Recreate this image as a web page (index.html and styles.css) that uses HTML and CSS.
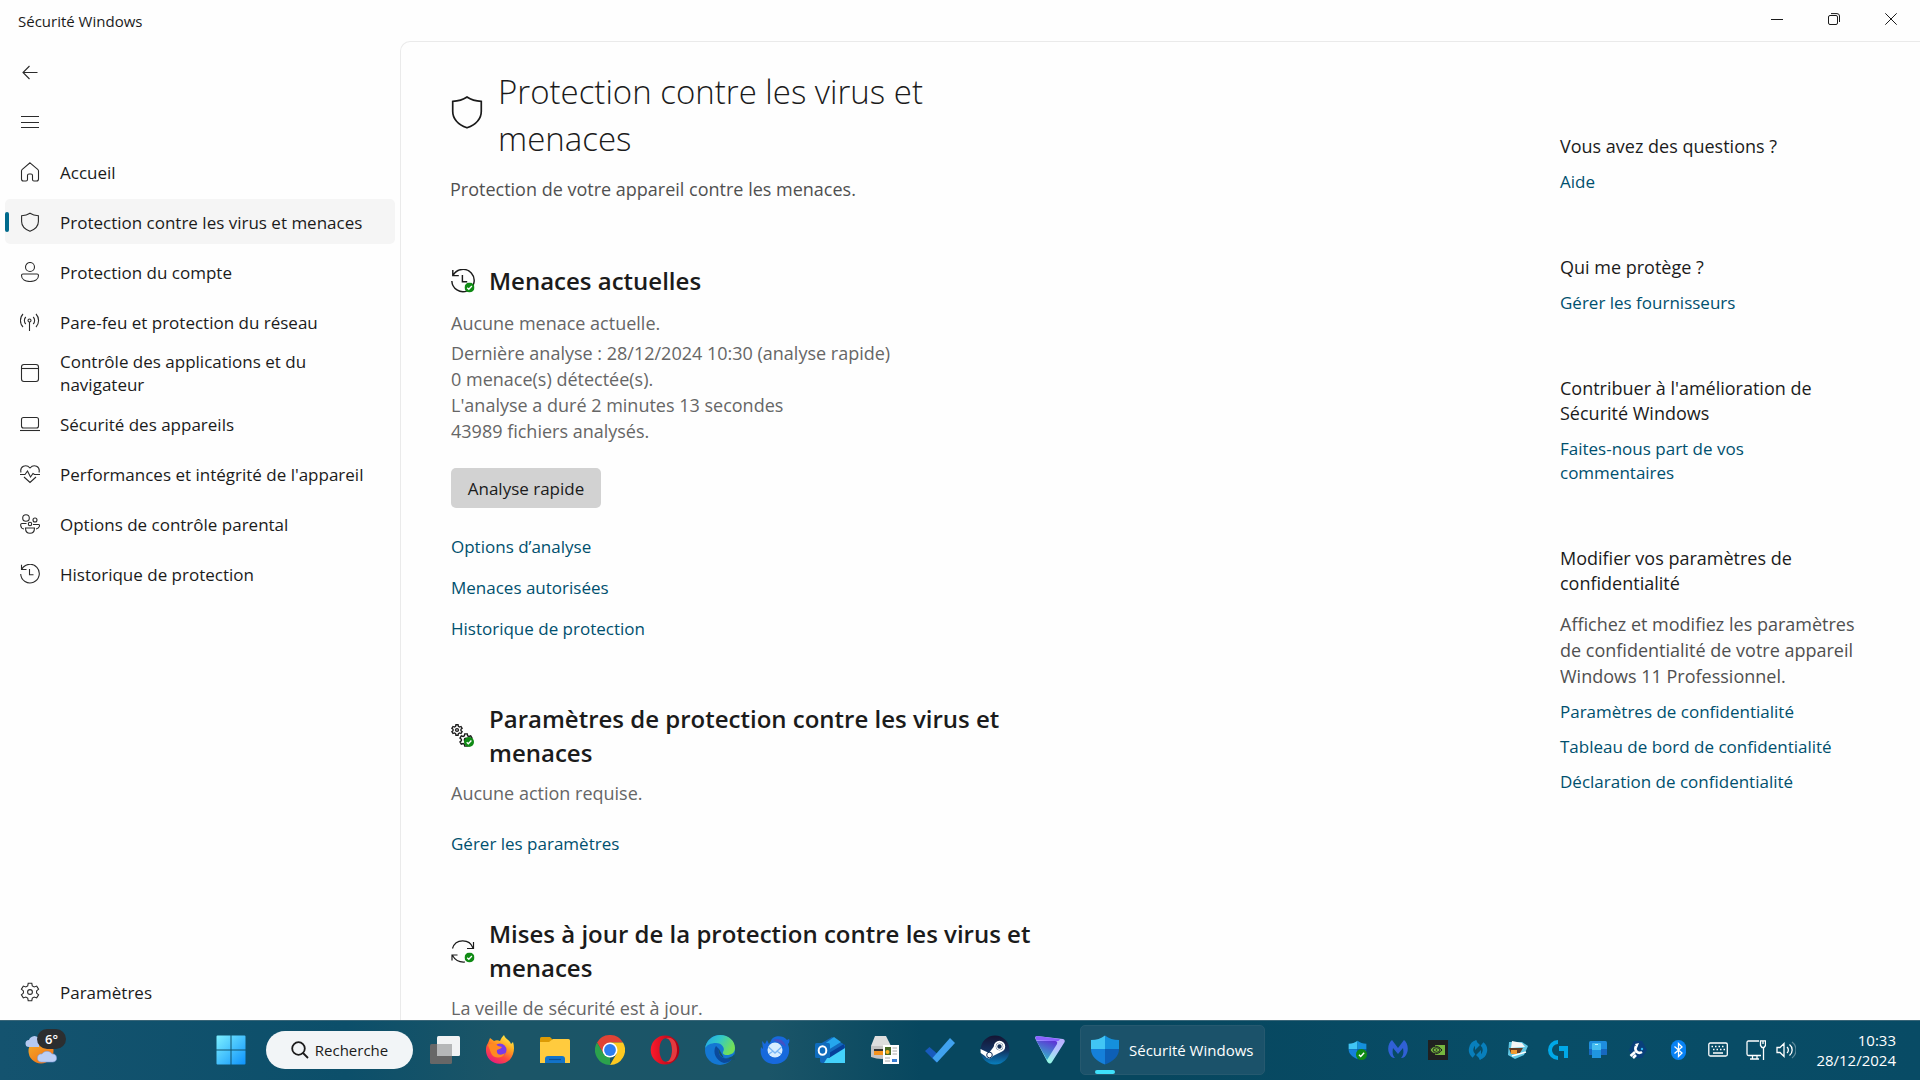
FILE: index.html
```html
<!DOCTYPE html>
<html lang="fr">
<head>
    <meta charset="UTF-8">
    <meta name="viewport" content="width=device-width, initial-scale=1.0">
    <title>Sécurité Windows</title>
    <link rel="stylesheet" href="styles.css">
</head>
<body>
    <!-- shared icons -->
    <svg class="sprite" aria-hidden="true">
        <symbol id="shield" viewBox="0 0 20 20"><path d="M10 1.2C7.600 2.800 4.800 3.600 1.600 3.800V9.500C1.600 14 4.800 17.300 10 19.300C15.200 17.300 18.400 14 18.400 9.500V3.800C15.200 3.600 12.400 2.800 10 1.200Z"/></symbol>
        <symbol id="history" viewBox="0 0 20 20"><path d="M1.500 .8V5.500H6.500M1.800 5.200A9.300 9.300 0 1 1 .7 10M9.500 5V10.700H13.500"/></symbol>
        <symbol id="gear" viewBox="0 0 20 20"><path d="M8.200 1.300H11.800L12.300 3.900L14.200 5L16.700 4.100L18.600 7.200L16.600 8.900V11.100L18.600 12.800L16.700 15.900L14.200 15L12.300 16.100L11.800 18.700H8.200L7.700 16.100L5.800 15L3.300 15.900L1.400 12.800L3.400 11.100V8.900L1.400 7.200L3.300 4.100L5.800 5L7.700 3.900Z"/><circle cx="10" cy="10" r="2.400"/></symbol>
        <symbol id="check" viewBox="0 0 10 10"><circle cx="5" cy="5" r="5" fill="#0f8a14" stroke="none"/><path d="M2.700 5.200L4.300 6.800L7.400 3.500" fill="none" stroke="#fff" stroke-width="1.300"/></symbol>
        <symbol id="defender" viewBox="0 0 30 30"><path d="M15 .5C11 3.500 6.500 5 1 5V14H15Z" fill="#41c5f5"/><path d="M15 .5C19 3.500 23.500 5 29 5V14H15Z" fill="#1590dc"/><path d="M1 14H15V29.500C6.500 26 1 21.500 1 14Z" fill="#1580da"/><path d="M29 14H15V29.500C23.500 26 29 21.500 29 14Z" fill="#0d5fb6"/></symbol>
    </svg>

    <header class="titlebar">
        <span class="window-title">Sécurité Windows</span>
        <div class="window-buttons">
            <button aria-label="Réduire"><svg width="12" height="12" viewBox="0 0 12 12"><path d="M0 6.500H12"/></svg></button>
            <button aria-label="Niveau inférieur"><svg width="12" height="12" viewBox="0 0 12 12"><rect x=".5" y="2.500" width="9" height="9" rx="1.500"/><path d="M3 .6H9A2.500 2.500 0 0 1 11.500 3V9"/></svg></button>
            <button aria-label="Fermer"><svg width="12" height="12" viewBox="0 0 12 12"><path d="M.3 .3L11.700 11.700M11.700 .3L.3 11.700"/></svg></button>
        </div>
    </header>

    <div class="window">
        <nav class="sidebar">
            <button class="nav-item" aria-label="Précédent"><svg viewBox="0 0 20 20"><path d="M17.500 10.500H3M9.500 4L3 10.500L9.500 17"/></svg></button>
            <button class="nav-item" aria-label="Menu"><svg viewBox="0 0 20 20"><path d="M1 4.500H19M1 10.500H19M1 15.500H19"/></svg></button>
            <a href="#" class="nav-item"><svg viewBox="0 0 20 20"><path d="M10 .8L17.700 7.300Q18.500 8 18.500 9V17Q18.500 19 16.500 19H14Q12.500 19 12.500 17.500V13.500Q12.500 12 11 12H9Q7.500 12 7.500 13.500V17.500Q7.500 19 6 19H3.500Q1.500 19 1.500 17V9Q1.500 8 2.300 7.300Z"/></svg><span>Accueil</span></a>
            <a href="#" class="nav-item active"><svg><use href="#shield"/></svg><span>Protection contre les virus et menaces</span></a>
            <a href="#" class="nav-item"><svg viewBox="0 0 20 20"><circle cx="10" cy="5" r="4.500"/><path d="M3 12H17Q18.500 12 18.500 13.500C18.500 17.500 14.500 19.500 10 19.500S1.500 17.500 1.500 13.500Q1.500 12 3 12Z"/></svg><span>Protection du compte</span></a>
            <a href="#" class="nav-item"><svg viewBox="0 0 20 20"><circle cx="9.500" cy="8.500" r="1.500"/><path d="M9.500 10V19M5.800 12A5 5 0 0 1 5.800 5M13.200 12A5 5 0 0 0 13.200 5M3 15A9.500 9.500 0 0 1 3 2M16 15A9.500 9.500 0 0 0 16 2"/></svg><span>Pare-feu et protection du réseau</span></a>
            <a href="#" class="nav-item two-lines"><svg viewBox="0 0 20 20"><rect x="1.500" y="1.500" width="17" height="17" rx="2.500"/><path d="M1.500 5.500H18.500"/></svg><span>Contrôle des applications et du navigateur</span></a>
            <a href="#" class="nav-item"><svg viewBox="0 0 20 20"><rect x="1.500" y="3.500" width="17" height="10.500" rx="2"/><path d="M0 16.500H20"/></svg><span>Sécurité des appareils</span></a>
            <a href="#" class="nav-item"><svg viewBox="0 0 20 20"><path d="M1 8.500C-.5 2.500 6 -.5 10 4C14 -.5 20.500 2.500 19 8.500M0 10.500H5L7.500 7L10.500 13L13 9.500L14.500 10.500H20M4 13L10 18.500L16 13"/></svg><span>Performances et intégrité de l'appareil</span></a>
            <a href="#" class="nav-item"><svg viewBox="0 0 20 20"><circle cx="6" cy="4" r="3.300"/><circle cx="15" cy="6" r="2"/><circle cx="10" cy="10" r="1.700"/><path d="M6.500 9.500H2Q.5 9.500 .7 11.500Q1 14.500 4 15M13 10.500H18.500Q20 10.500 19.300 12.500Q18.500 14.500 16 15M5.500 14H14.500C14.500 17.500 12.500 19.300 10 19.300S5.500 17.500 5.500 14Z"/></svg><span>Options de contrôle parental</span></a>
            <a href="#" class="nav-item"><svg><use href="#history"/></svg><span>Historique de protection</span></a>
            <a href="#" class="nav-item settings"><svg><use href="#gear"/></svg><span>Paramètres</span></a>
        </nav>

        <div class="page">
            <main class="content">
                <div class="page-title">
                    <svg><use href="#shield"/></svg>
                    <h1>Protection contre les virus et menaces</h1>
                </div>
                <p class="subtitle">Protection de votre appareil contre les menaces.</p>

                <section class="threats">
                    <div class="section-title">
                        <svg viewBox="0 0 24 24"><use href="#history" width="24" height="24"/><use href="#check" x="13.500" y="13.500" width="10" height="10"/></svg>
                        <h2>Menaces actuelles</h2>
                    </div>
                    <p class="status">Aucune menace actuelle.</p>
                    <p class="details">Dernière analyse : 28/12/2024 10:30 (analyse rapide)<br>
                        0 menace(s) détectée(s).<br>
                        L'analyse a duré 2 minutes 13 secondes<br>
                        43989 fichiers analysés.</p>
                    <button class="scan-button">Analyse rapide</button>
                    <div class="links">
                        <a href="#">Options d’analyse</a>
                        <a href="#">Menaces autorisées</a>
                        <a href="#">Historique de protection</a>
                    </div>
                </section>

                <section>
                    <div class="section-title">
                        <svg viewBox="0 0 24 24"><use href="#gear" x="0" y="0" width="12" height="12" stroke-width="2.200"/><use href="#gear" x="8" y="9" width="14" height="14" stroke-width="2"/><use href="#check" x="13" y="13" width="10" height="10"/></svg>
                        <h2>Paramètres de protection contre les virus et menaces</h2>
                    </div>
                    <p class="status">Aucune action requise.</p>
                    <div class="links">
                        <a href="#">Gérer les paramètres</a>
                    </div>
                </section>

                <section>
                    <div class="section-title">
                        <svg viewBox="0 0 24 24"><path d="M1.500 9.500C4.500 -.5 18.500 -.5 22 9M22.500 3V9.500H16M1 21.500V16H6.500M1.500 16.500C4 21 8 23.500 14 23"/><use href="#check" x="13.500" y="13.500" width="10" height="10"/></svg>
                        <h2>Mises à jour de la protection contre les virus et menaces</h2>
                    </div>
                    <p class="status">La veille de sécurité est à jour.</p>
                </section>
            </main>

            <aside class="help">
                <section>
                    <h3>Vous avez des questions ?</h3>
                    <a href="#">Aide</a>
                </section>
                <section>
                    <h3>Qui me protège ?</h3>
                    <a href="#">Gérer les fournisseurs</a>
                </section>
                <section>
                    <h3>Contribuer à l'amélioration de Sécurité Windows</h3>
                    <a href="#">Faites-nous part de vos<br>commentaires</a>
                </section>
                <section>
                    <h3>Modifier vos paramètres de confidentialité</h3>
                    <p>Affichez et modifiez les paramètres de confidentialité de votre appareil Windows 11 Professionnel.</p>
                    <a href="#">Paramètres de confidentialité</a>
                    <a href="#">Tableau de bord de confidentialité</a>
                    <a href="#">Déclaration de confidentialité</a>
                </section>
            </aside>
        </div>
    </div>

    <footer class="taskbar">
        <div class="widgets">
            <button class="weather" aria-label="Météo">
                <svg width="34" height="30" viewBox="0 0 34 30">
                    <defs><linearGradient id="sun" x1="0" y1="0" x2="0.700" y2="1"><stop offset="0" stop-color="#f5b12a"/><stop offset="1" stop-color="#f07318"/></linearGradient></defs>
                    <circle cx="16" cy="17" r="12.500" fill="url(#sun)"/>
                    <path d="M4 13A3.500 3.500 0 0 1 4 6A6 6 0 0 1 14 4V13Z" fill="#b5c9f0"/>
                    <path d="M16 28A4 4 0 0 1 17 20A6 6 0 0 1 27 20A4 4 0 0 1 28 28Z" fill="#bccff5" stroke="#7f9fdd" stroke-width=".6"/>
                </svg>
                <span class="badge">6°</span>
            </button>
        </div>

        <div class="apps">
            <button class="app" aria-label="Démarrer"><svg viewBox="0 0 30 30"><defs><linearGradient id="win" x1="0" y1="0" x2="1" y2="1"><stop offset="0" stop-color="#7df0ff"/><stop offset="1" stop-color="#0d92fb"/></linearGradient></defs><path d="M1.500 .5H14.500V14.500H.5V1.500Q.5 .5 1.500 .5ZM15.500 .5H28.500Q29.500 .5 29.500 1.500V14.500H15.500ZM.5 15.500H14.500V29.500H1.500Q.5 29.500 .5 28.500ZM15.500 15.500H29.500V28.500Q29.500 29.500 28.500 29.500H15.500Z" fill="url(#win)"/></svg></button>
            <button class="search"><svg width="18" height="18" viewBox="0 0 18 18"><circle cx="7.500" cy="7.500" r="6.300"/><path d="M12 12L17 17"/></svg>Recherche</button>
            <button class="app" aria-label="Vue des tâches"><svg viewBox="0 0 30 30"><rect y="9" width="22" height="20" rx="1.500" fill="#676767"/><rect x="7" y="1" width="23" height="20" rx="1.500" fill="#f1f3f4"/><path d="M7 9H22V21H8.500Q7 21 7 19.500Z" fill="#b5b7b8"/></svg></button>
            <button class="app" aria-label="Firefox"><svg viewBox="0 0 30 30">
                <defs><linearGradient id="fox" x1=".8" y1="0" x2=".2" y2="1"><stop offset="0" stop-color="#fff44f"/><stop offset=".35" stop-color="#ffa51e"/><stop offset=".65" stop-color="#ff4a3d"/><stop offset="1" stop-color="#e31587"/></linearGradient></defs>
                <path d="M5 3L9 6C11 5 13 5 15 6C16 3 18 1 19 0C20 4 25 5 26 9L28 7C30 13 29 20 25 24.500C20 30 10 30 5 25C0 20 0 12 3 8Z" fill="url(#fox)"/>
                <circle cx="15" cy="15" r="6.500" fill="#7a3be8"/><path d="M3 10C7 7 11 9 13 11L17 12C16 14 13 14 12 15C11 20 16 21 20 18C18 24 8 24 6 18Z" fill="#ff8a21"/></svg></button>
            <button class="app" aria-label="Explorateur de fichiers"><svg viewBox="0 0 30 30"><path d="M0 3.500Q0 2 1.500 2H10L13 5V12H0Z" fill="#dc9b05"/><path d="M0 7H9L13 4H28.500Q30 4 30 5.500V28H0Z" fill="#ffcb3e"/><path d="M5 28V24Q5 21 8 21H22Q25 21 25 24V28Z" fill="#1273c9"/><path d="M9 24.500H21" stroke="#0b4f94" stroke-width="1.200"/></svg></button>
            <button class="app" aria-label="Chrome"><svg viewBox="0 0 30 30"><path d="M2 7.500A15 15 0 0 1 28 7.500H15V15L8.500 18.800Z" fill="#e04335"/><path d="M2 7.500L8.500 18.800L15 22.500V30A15 15 0 0 1 2 7.500Z" fill="#2ba24c"/><path d="M28 7.500A15 15 0 0 1 15 30L21.500 18.800L15 7.500Z" fill="#fdc921"/><circle cx="15" cy="15" r="7.500" fill="#fff"/><circle cx="15" cy="15" r="5.900" fill="#2d7df0"/></svg></button>
            <button class="app" aria-label="Opera"><svg viewBox="0 0 30 30"><defs><linearGradient id="op" x1="0" y1="0" x2="1" y2="0"><stop offset="0" stop-color="#fb1b2c"/><stop offset="1" stop-color="#a70014"/></linearGradient></defs><path fill-rule="evenodd" d="M15 .5A14.300 14.500 0 1 0 15 29.500A14.300 14.500 0 1 0 15 .5ZM16 3.200C19.500 3.200 22 8 22 15S19.500 26.800 16 26.800S9.500 22 9.500 15S12 3.200 16 3.200Z" fill="url(#op)"/><path d="M16 3.200C24 1 27 9 27 15S24 29 16 26.800C19.500 26.800 22 22 22 15S19.500 3.200 16 3.200Z" fill="#e33a3f"/></svg></button>
            <button class="app" aria-label="Edge"><svg viewBox="0 0 30 30"><defs><linearGradient id="ed" x1="0" y1="0" x2="1" y2=".4"><stop offset="0" stop-color="#20a5ea"/><stop offset=".5" stop-color="#32c8c8"/><stop offset="1" stop-color="#72e058"/></linearGradient></defs><circle cx="15" cy="15" r="15" fill="#1477d3"/><path d="M0 14C1 5 8 0 15 0C24 0 30 6 30 13C30 18 26 20 22 20C18 20 17 18 18.500 16C20 13 17 8 11 8C6 8 1 10 0 14Z" fill="url(#ed)"/><path d="M11 11C7 17 11 26 19 28C23 28 27 25 28.500 22C22 26 12 23 14 14Z" fill="#0b4a9b"/><path d="M14 14C13 18 15 22 20 23C25 23 28.500 21 29 19L30 25L19 23Z" fill="#15526a"/></svg></button>
            <button class="app" aria-label="Thunderbird"><svg viewBox="0 0 30 30"><path d="M11 6C12 1 22 -1 27 5L29 4C30 6 29 8 28 9C32 20 25 29 15 29C5 29 -1 22 1 12L3 14L2 6L5 9L7 5L9 9Z" fill="#1769dc"/><path d="M13 5C19 2 25 6 26 12L20 8Z" fill="#4551c4"/><circle cx="15" cy="15" r="7.500" fill="#d7edff"/><path d="M8.500 12L15 18L21.500 12M9 19L13 16M21 19L17 16" fill="none" stroke="#78b6f5" stroke-width="1.300"/></svg></button>
            <button class="app" aria-label="Outlook"><svg viewBox="0 0 30 30"><path d="M5 9L17 2L30 10V26Q30 28 28 28H7Q5 28 5 26Z" fill="#1268bd"/><path d="M8 10L19 2L26 7L13 15Z" fill="#25a6ed"/><path d="M14 20L30 12V28H9Z" fill="#44d2fb"/><path d="M14 18L29 9L30 13L14 23Z" fill="#06409a"/><rect y="8" width="15" height="15" rx="1.500" fill="#0f6cbd"/><ellipse cx="7.500" cy="15.500" rx="3.800" ry="4.300" fill="none" stroke="#fff" stroke-width="2"/></svg></button>
            <button class="app" aria-label="Scanner"><svg viewBox="0 0 30 30"><path d="M5 1H16L21 11H1Z" fill="#dedede"/><path d="M1 11H22V22Q12 26 1 22Z" fill="#c3c3c3"/><path d="M4 14H18V20H4Z" fill="#f4931e"/><path d="M4 14H18V16H4Z" fill="#333"/><rect x="13" y="10" width="16" height="19" fill="#fff"/><rect x="15" y="12" width="6" height="8" fill="#496b26"/><circle cx="17.500" cy="17" r="2" fill="#ffb21e"/><path d="M22.500 13H27M22.500 16H27M22.500 19H27M15 23H20M15 26H20" stroke="#aaa"/><path d="M22 24H27V27H22Z" fill="#397fd3"/></svg></button>
            <button class="app" aria-label="To Do"><svg viewBox="0 0 30 30"><path d="M4.500 12L16 22L11.500 27.500L0 16Z" fill="#185abd"/><path d="M7.500 23L25 3L30 8L12 27.500Z" fill="#40a2ef"/></svg></button>
            <button class="app" aria-label="Steam"><svg viewBox="0 0 30 30"><defs><linearGradient id="st" x1="0" y1="0" x2="0" y2="1"><stop offset="0" stop-color="#151432"/><stop offset=".5" stop-color="#13315e"/><stop offset="1" stop-color="#087fbe"/></linearGradient></defs><circle cx="15" cy="15" r="14.500" fill="url(#st)"/><path d="M.5 14L9 18L15 10L21 17L13 21A4.500 4.500 0 0 1 5 21L.7 18Z" fill="#fff"/><circle cx="19.500" cy="11.500" r="4.700" fill="#14305a" stroke="#fff" stroke-width="2"/><circle cx="19.500" cy="11.500" r="2.800" fill="none" stroke="#fff" stroke-width="1.200"/><circle cx="9.500" cy="20" r="2.800" fill="none" stroke="#14305a" stroke-width="1"/></svg></button>
            <button class="app" aria-label="Proton VPN"><svg viewBox="0 0 30 30"><defs><linearGradient id="pv" x1="1" y1="0" x2=".4" y2="1"><stop offset="0" stop-color="#b9a8ff"/><stop offset=".5" stop-color="#b5c3ff"/><stop offset="1" stop-color="#8fffe0"/></linearGradient><linearGradient id="pv2" x1=".8" y1="0" x2=".4" y2="1"><stop offset="0" stop-color="#5d35d5"/><stop offset="1" stop-color="#35b6ca"/></linearGradient></defs><path d="M2 1L28 4Q31 5 29 8L17 27Q15 30 12.500 27L.5 4Q-.5 1 2 1Z" fill="url(#pv)"/><path d="M1.500 6H21Q23 7 22 9L12 25Z" fill="url(#pv2)"/><path d="M2 1L25 4Q24 7 20 6L1.500 5.500Q-.5 1 2 1Z" fill="#8a63ff"/></svg></button>
            <button class="app-open"><svg width="30" height="30"><use href="#defender"/></svg>Sécurité Windows</button>
        </div>

        <div class="tray">
            <button aria-label="Sécurité Windows"><svg viewBox="0 0 20 20"><use href="#defender" x="0" y="0" width="19" height="20"/><use href="#check" x="8" y="9" width="11" height="11"/></svg></button>
            <button aria-label="Malwarebytes"><svg viewBox="0 0 20 20"><path d="M4 0L10 8L16 0C19 2 21 8 19 13C18 16 16 18 13 18C16 15 15.500 11 15 8L10 14L5 8C4.500 11 4 15 7 18C4 18 2 16 1 13C-1 8 1 2 4 0Z" fill="#3060d6"/></svg></button>
            <button aria-label="NVIDIA"><svg viewBox="0 0 20 20"><rect width="20" height="20" fill="#202020"/><path d="M7 5H17V15H7Z" fill="#76b83f"/><path d="M2 10C5 5 10 5 14 10C10 15 5 15 2 10Z" fill="#76b83f" stroke="#202020"/><ellipse cx="8.500" cy="10" rx="3.500" ry="2.300" fill="none" stroke="#202020"/><circle cx="8.500" cy="10" r=".8" fill="#202020"/></svg></button>
            <button aria-label="Synchronisation"><svg viewBox="0 0 20 20"><path d="M9 2.500A7 7.500 0 0 0 6 16M11 17.500A7 7.500 0 0 0 14 4" fill="none" stroke="#087fbc" stroke-width="4.500"/><path d="M7 0L12 5L7 10ZM13 10L8 15L13 20Z" fill="#087fbc"/></svg></button>
            <button aria-label="Imprimante"><svg viewBox="0 0 20 20"><path d="M1 2L14 2L20 6L16 15L7 19L0 15Z" fill="#61c7e4"/><path d="M4 1L14 3L17 7L3 8Z" fill="#f5f5f5"/><path d="M1 8L15 8L12 13L3 14Z" fill="#643a22"/><path d="M3 10H9V14H3Z" fill="#f19b31"/><path d="M4 16L18 12" stroke="#fff" stroke-width="1.500"/></svg></button>
            <button aria-label="Logitech G HUB"><svg viewBox="0 0 20 20"><path d="M10 2A8 8 0 0 0 10 18" fill="none" stroke="#00a8e8" stroke-width="4"/><path d="M11 6H20V18H16V11H11Z" fill="#00a8e8"/></svg></button>
            <button aria-label="Lien avec Windows"><svg viewBox="0 0 20 20"><rect x="1" y="1" width="18" height="14" rx="1.500" fill="#1e8ddd"/><path d="M1 9H19V13.500Q19 15 17.500 15H2.500Q1 15 1 13.500Z" fill="#1768c0"/><rect x="4" y="3" width="9" height="15" rx="1" fill="#45bdf0"/><path d="M4 10H13V18H4Z" fill="#1f96e0"/><path d="M7 4.500H10" stroke="#bff1ff"/></svg></button>
            <button aria-label="SteelSeries"><svg viewBox="0 0 20 20"><path d="M6 1H14L19 10L14 18H5L1 10Z" fill="#093f7a"/><path d="M2.500 16L7 12M5 18L8 15M8 6C6 11 10 14.500 14 12" fill="none" stroke="#fff" stroke-width="2.600"/><path d="M7 4L11 3L9 8" fill="#fff"/><circle cx="14" cy="9" r="1.200" fill="#31b8ee"/></svg></button>
            <button aria-label="Bluetooth"><svg viewBox="0 0 20 20"><rect x="3" width="15" height="20" rx="7.500" fill="#0882f5"/><path d="M6.500 6.500L14 13L10.500 16.500V3.500L14 7L6.500 13.500" fill="none" stroke="#fff" stroke-width="1.300"/></svg></button>
            <button aria-label="Clavier tactile"><svg class="line" viewBox="0 0 20 20"><rect x=".8" y="3" width="18.500" height="13" rx="1.500"/><path d="M5 13H15M3.500 6.500H5M7 6.500H8.500M10.500 6.500H12M14 6.500H15.500M5 9.500H6.500M8.500 9.500H10M12 9.500H13.500M15.500 9.500H17"/></svg></button>
            <button class="network" aria-label="Réseau et son">
                <svg class="line" viewBox="0 0 20 20"><path d="M13 1H2.500Q1 1 1 2.500V14Q1 15.500 2.500 15.500H15M4 19H13M6.500 15.500V19M11 15.500V19M17.500 8V20M14.500 .8H19.500V5.500L18 7.500H16L14.500 5.500ZM17 1V4"/></svg>
                <svg class="line" viewBox="0 0 20 20"><path d="M1 7.500H4L8 3.500V16.500L4 12.500H1ZM11 7A4 4 0 0 1 11 13M13.500 4.500A7 7 0 0 1 13.500 15.500"/><path d="M16 2A10 10 0 0 1 16 18" opacity=".35"/></svg>
            </button>
            <button class="clock">10:33<br>28/12/2024</button>
        </div>
    </footer>
</body>
</html>
```

FILE: styles.css
```css
* {
    box-sizing: border-box;
}
body {
    margin: 0;
    height: 100vh;
    display: flex;
    flex-direction: column;
    overflow: hidden;
    font-family: "Open Sans", "Noto Sans", sans-serif;
    font-size: 18px;
    color: #1b1b1b;
    background-color: #fefefe;
}
h1, h2, h3, p {
    margin: 0;
    font-weight: 400;
}
a {
    color: #00506e;
    text-decoration: none;
}
button {
    font-family: inherit;
    color: inherit;
    border: none;
    padding: 0;
    background-color: transparent;
    cursor: pointer;
}
svg {
    flex-shrink: 0;
}
.sprite {
    display: none;
}

/* title bar */
.titlebar {
    display: flex;
    justify-content: space-between;
    height: 41px;
    flex-shrink: 0;
}
.window-title {
    padding-left: 18px;
    font-size: 15px;
    line-height: 42px;
}
.window-buttons {
    display: flex;
    padding-right: 1px;
}
.window-buttons button {
    width: 57px;
    height: 38px;
}
.window-buttons svg {
    display: block;
    margin: 0 auto;
    fill: none;
    stroke: #1b1b1b;
}
.window {
    flex: 1;
    display: flex;
    min-height: 0;
}

/* navigation */
.sidebar {
    width: 400px;
    flex-shrink: 0;
    display: flex;
    flex-direction: column;
    gap: 5px;
    padding: 8px 5px 6px;
}
.nav-item {
    display: flex;
    align-items: center;
    gap: 20px;
    min-height: 45px;
    padding: 0 15px;
    border-radius: 5px;
    font-size: 17px;
    line-height: 23px;
    color: #1b1b1b;
}
.nav-item span {
    padding-top: 1px;
}
.nav-item svg {
    width: 20px;
    height: 20px;
    fill: none;
    stroke: #2b2b2b;
    stroke-width: 1.1;
}
.nav-item.active {
    position: relative;
    background-color: #f5f5f5;
}
.nav-item.active::before {
    content: "";
    position: absolute;
    left: 0;
    top: 13px;
    width: 4px;
    height: 20px;
    border-radius: 2px;
    background-color: #006a8c;
}
.nav-item.two-lines {
    padding-right: 60px;
}
.nav-item.settings {
    margin-top: auto;
}

/* page */
.page {
    flex: 1;
    display: flex;
    justify-content: space-between;
    overflow: hidden;
    padding: 26px 50px 0 49px;
    border: solid #eaeaea;
    border-width: 1px 0 0 1px;
    border-top-left-radius: 10px;
}
.content {
    width: 600px;
}
.page-title {
    display: flex;
    align-items: flex-start;
    gap: 14px;
}
.page-title svg {
    width: 34px;
    height: 34px;
    margin-top: 27px;
    fill: none;
    stroke: #1b1b1b;
}
.page-title h1 {
    font-size: 33px;
    font-weight: 300;
    line-height: 47px;
}
.subtitle {
    margin-top: 15px;
    line-height: 25px;
    color: #505050;
}
.content section {
    margin-top: 62px;
    padding-left: 1px;
}
.content section + section {
    margin-top: 61px;
}
.section-title {
    display: flex;
    align-items: center;
    gap: 14px;
}
.section-title svg {
    width: 24px;
    height: 24px;
    fill: none;
    stroke: #1b1b1b;
    stroke-width: 1.2;
}
.section-title h2 {
    font-size: 24px;
    font-weight: 600;
    line-height: 34px;
}
.status {
    margin-top: 11px;
    line-height: 24px;
    color: #666;
}
.threats .status {
    margin-top: 13px;
}
.details {
    margin-top: 5px;
    line-height: 26px;
    color: #666;
}
.scan-button {
    margin-top: 24px;
    width: 150px;
    height: 40px;
    border-radius: 5px;
    font-size: 17px;
    background-color: #d2d2d2;
}
.links {
    display: flex;
    flex-direction: column;
    align-items: flex-start;
    gap: 17px;
    margin-top: 27px;
    font-size: 17px;
    line-height: 24px;
}

/* right column */
.help {
    width: 310px;
    padding-top: 66px;
}
.help section {
    margin-bottom: 61px;
}
.help h3 {
    font-size: 18px;
    line-height: 25px;
}
.help p {
    margin-top: 15px;
    line-height: 26px;
    color: #505050;
}
.help a {
    display: block;
    margin-top: 11px;
    font-size: 17px;
    line-height: 24px;
}

/* taskbar */
.taskbar {
    display: flex;
    flex-shrink: 0;
    height: 60px;
    padding-bottom: 1px;
    border-top: 1px solid #3a6678;
    color: #fff;
    background: linear-gradient(90deg, #14536f 0%, #0c4f6a 18%, #1b5567 26%, #1b5568 40%, #07475f 48%, #07475f 60%, #084d67 80%, #084b65 100%);
}
.widgets {
    width: 203px;
}
.weather {
    position: relative;
    margin: 13px 0 0 25px;
}
.badge {
    position: absolute;
    left: 12px;
    top: -5px;
    width: 29px;
    height: 20px;
    border-radius: 10px;
    font-size: 13px;
    font-weight: 600;
    line-height: 20px;
    background-color: #2c2e30;
}
.apps {
    display: flex;
    align-items: center;
}
.app {
    width: 55px;
    height: 50px;
}
.app svg {
    display: block;
    width: 30px;
    height: 30px;
    margin: 0 auto;
}
.search {
    display: flex;
    align-items: center;
    justify-content: center;
    gap: 6px;
    width: 147px;
    height: 38px;
    margin: 0 4px 0 8px;
    border-radius: 19px;
    font-size: 15px;
    color: #1b1b1b;
    background-color: #f2f5f7;
}
.search svg {
    fill: none;
    stroke: #1b1b1b;
    stroke-width: 1.8;
}
.app-open {
    position: relative;
    display: flex;
    align-items: center;
    gap: 9px;
    width: 185px;
    height: 50px;
    margin-left: 3px;
    padding-left: 9px;
    border: 1px solid #26596f;
    border-radius: 5px;
    font-size: 15px;
    color: #fff;
    background-color: #1b526a;
    white-space: nowrap;
}
.app-open::after {
    content: "";
    position: absolute;
    left: 14px;
    bottom: 0;
    width: 20px;
    height: 4px;
    border-radius: 2px;
    background-color: #3fe0fa;
}
.tray {
    display: flex;
    align-items: center;
    margin-left: auto;
    padding-right: 24px;
}
.tray button {
    width: 40px;
    height: 50px;
}
.tray svg {
    display: block;
    width: 20px;
    height: 20px;
    margin: 0 auto;
}
.tray .line {
    fill: none;
    stroke: #fff;
    stroke-width: 1.3;
}
.tray .network {
    display: flex;
    align-items: center;
    gap: 10px;
    width: 66px;
    padding: 0 8px;
}
.tray .clock {
    width: 92px;
    font-size: 15px;
    line-height: 20px;
    text-align: right;
}
```
